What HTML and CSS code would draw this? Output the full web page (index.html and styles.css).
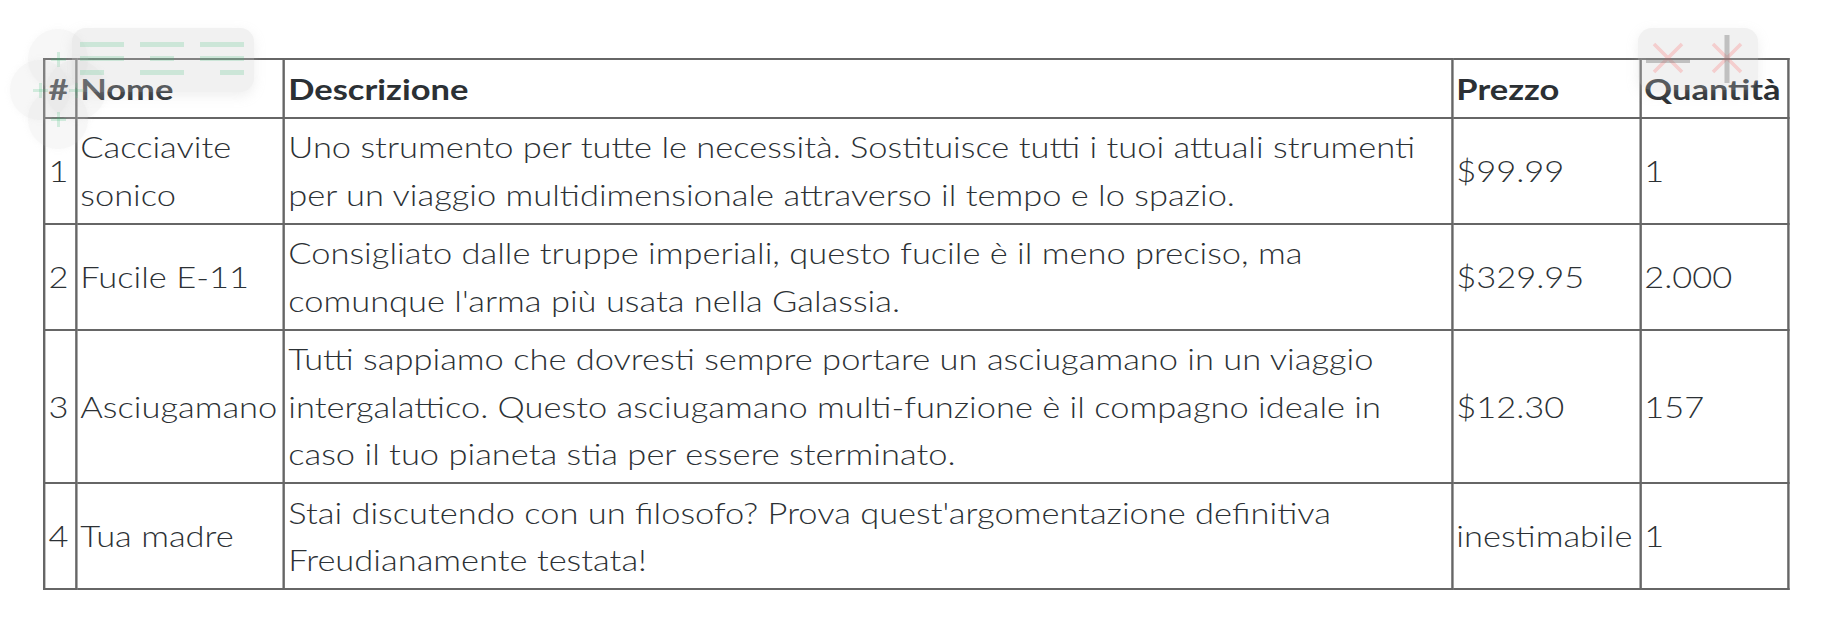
FILE: index.html
```html
<!DOCTYPE html>
<html lang="it">
<head>
<meta charset="utf-8">
<title>Tabella</title>
<link rel="stylesheet" href="styles.css">
</head>
<body>
<div class="page">
  <table class="data">
    <colgroup>
      <col class="c-num">
      <col class="c-name">
      <col class="c-desc">
      <col class="c-price">
      <col class="c-qty">
    </colgroup>
    <thead>
      <tr><th>#</th><th>Nome</th><th>Descrizione</th><th>Prezzo</th><th>Quantità</th></tr>
    </thead>
    <tbody>
      <tr><td>1</td><td>Cacciavite sonico</td><td>Uno strumento per tutte le necessità. Sostituisce tutti i tuoi attuali strumenti per un viaggio multidimensionale attraverso il tempo e lo spazio.</td><td>$99.99</td><td>1</td></tr>
      <tr><td>2</td><td>Fucile E-11</td><td>Consigliato dalle truppe imperiali, questo fucile è il meno preciso, ma comunque l'arma più usata nella Galassia.</td><td>$329.95</td><td>2.000</td></tr>
      <tr><td>3</td><td>Asciugamano</td><td>Tutti sappiamo che dovresti sempre portare un asciugamano in un viaggio intergalattico. Questo asciugamano multi-funzione è il compagno ideale in caso il tuo pianeta stia per essere sterminato.</td><td>$12.30</td><td>157</td></tr>
      <tr><td>4</td><td>Tua madre</td><td>Stai discutendo con un filosofo? Prova quest'argomentazione definitiva Freudianamente testata!</td><td>inestimabile</td><td>1</td></tr>
    </tbody>
  </table>

  <div class="bubble b-top"><span class="plus"></span></div>
  <div class="bubble b-left"><span class="plus"></span></div>
  <div class="bubble b-right"><span class="plus"></span></div>
  <div class="bubble b-bottom"><span class="plus"></span></div>

  <div class="toolbar tb-align">
    <div class="align al-left"><span class="ln"></span><span class="ln"></span><span class="ln short"></span></div>
    <div class="align al-center"><span class="ln"></span><span class="ln short"></span><span class="ln"></span></div>
    <div class="align al-right"><span class="ln"></span><span class="ln"></span><span class="ln short"></span></div>
  </div>

  <div class="toolbar tb-delete">
    <div class="del del-row">
      <svg width="44" height="46" viewBox="0 0 44 46"><path d="M8 6 L36 34 M36 6 L8 34" stroke="rgba(255,80,80,0.22)" stroke-width="3.5" fill="none"/><rect x="0" y="20" width="44" height="5" fill="rgba(120,120,120,0.4)"/></svg>
    </div>
    <div class="del del-col">
      <svg width="44" height="46" viewBox="0 0 44 46"><path d="M8 6 L36 34 M36 6 L8 34" stroke="rgba(255,80,80,0.22)" stroke-width="3.5" fill="none"/><rect x="19.5" y="-3" width="5" height="48" fill="rgba(120,120,120,0.4)"/></svg>
    </div>
  </div>
</div>
</body>
</html>
```

FILE: styles.css
```css
html, body {
  margin: 0;
  padding: 0;
  background: #ffffff;
}

.page {
  position: relative;
  width: 1830px;
  height: 626px;
  padding: 58px 0 0 43px;
  box-sizing: border-box;
  font-family: Lato, "Open Sans", sans-serif;
  color: #2f3437;
}

/* The reference is horizontally stretched (~1.19x); the table is laid
   out at its natural width and widened to match. */
.data {
  border-collapse: collapse;
  table-layout: fixed;
  width: 1463.9px;
  font-size: 28.95px;
  line-height: 47.3px;
  transform: scaleX(1.1914);
  transform-origin: 0 0;
}

.c-num { width: 26.9px; }
.c-name { width: 174.6px; }
.c-desc { width: 980.4px; }
.c-price { width: 157.8px; }
.c-qty { width: 124.2px; }

.data th,
.data td {
  border: 2px solid #666666;
  padding: 4.7px 1px 4.7px 2.4px;
  text-align: left;
  vertical-align: middle;
}

.data th {
  font-weight: 700;
  color: #2b3034;
}

.data td {
  font-weight: 300;
  color: #2c3135;
}

.data th:first-child,
.data td:first-child {
  padding-left: 2.6px;
  padding-right: 0;
}

/* overlay controls */
.bubble {
  position: absolute;
  width: 60px;
  height: 60px;
  border-radius: 50%;
  background: rgba(200, 200, 200, 0.15);
  box-shadow: 0 0 6px rgba(200, 200, 200, 0.12);
  display: flex;
  align-items: center;
  justify-content: center;
}

.b-top { left: 28px; top: 29px; }
.b-left { left: 10px; top: 60px; }
.b-right { left: 46px; top: 60px; }
.b-bottom { left: 28px; top: 89px; }

.plus {
  position: relative;
  width: 15px;
  height: 15px;
}

.plus::before,
.plus::after {
  content: "";
  position: absolute;
  background: rgba(60, 190, 120, 0.2);
}

.plus::before {
  left: 6px;
  top: 0;
  width: 3px;
  height: 15px;
}

.plus::after {
  left: 0;
  top: 6px;
  width: 15px;
  height: 3px;
}

.toolbar {
  position: absolute;
  top: 28px;
  border-radius: 14px;
  background: rgba(205, 205, 205, 0.28);
  box-shadow: 0 4px 12px rgba(190, 190, 190, 0.25);
  display: flex;
}

.tb-align {
  left: 72px;
  width: 182px;
  height: 64px;
  padding: 14px 0 0 8px;
  box-sizing: border-box;
  gap: 16px;
}

.align {
  width: 44px;
  display: flex;
  flex-direction: column;
  gap: 9px;
}

.ln {
  display: block;
  width: 44px;
  height: 5px;
  background: rgba(60, 190, 120, 0.2);
}

.ln.short {
  width: 24px;
}

.al-center { align-items: center; }
.al-right { align-items: flex-end; }

.tb-delete {
  left: 1638px;
  width: 120px;
  height: 62px;
  padding: 10px 0 0 8px;
  box-sizing: border-box;
  gap: 15px;
}

.del svg {
  display: block;
  overflow: visible;
}
```
